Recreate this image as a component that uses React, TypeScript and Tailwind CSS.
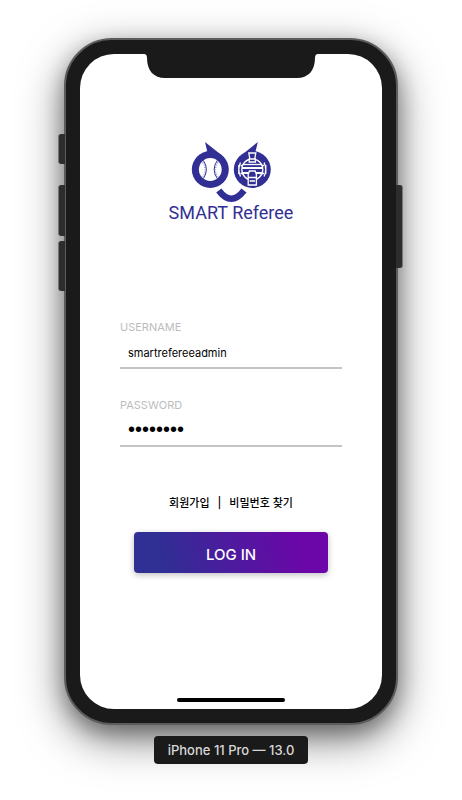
import { useState } from "react";

function Logo() {
  return (
    <svg viewBox="-1 0 84 62" className="h-[62px] w-[84px]" aria-hidden="true">
      <g fill="#312f94">
        <path d="M15 1 L17.5 11.5 L32 14.5 Z" />
        <circle cx="20.3" cy="28.5" r="18.5" />
        <path d="M67.8 1 L65.3 11.5 L51 14.5 Z" />
        <circle cx="62.3" cy="28.5" r="18.5" />
      </g>
      <circle cx="20.3" cy="28.5" r="11.4" fill="#fff" />
      <g fill="none" stroke="#312f94">
        <path d="M13.4 19.5 Q19.4 28.5 13.4 37.5 M27.2 19.5 Q21.2 28.5 27.2 37.5" strokeWidth="1" />
        <path d="M12.6 21.5 Q17.6 28.5 12.6 35.5 M28 21.5 Q23 28.5 28 35.5" strokeWidth="1.4" strokeDasharray="1 1.4" opacity=".5" />
        <path d="M28.8 49.5 Q41.2 66 54 49.5" strokeWidth="6.5" />
      </g>
      <g fill="none" stroke="#fff" strokeWidth="1.3">
        <circle cx="62.3" cy="28.5" r="10.5" />
        <path d="M53 23.5 H71.6" />
        <path d="M52 27 H72.6 M52.4 32 H72.2" strokeWidth="1.8" />
        <path d="M58.8 12 H65.8 L64.7 18 H59.9 Z M59.2 18 H65.4 V21 H59.2 Z" fill="#312f94" />
        <path d="M59.4 30 H65.2 L66.4 33.5 V44 H58.2 V33.5 Z M58.2 36.5 H66.4 M59.6 40 H65" fill="#312f94" />
        <path d="M50.5 21.5 Q47.2 28.5 50.5 35.5 M48.8 24 V33 M74.1 21.5 Q77.4 28.5 74.1 35.5 M75.8 24 V33 M50.5 24.5 H53 M71.5 24.5 H74 M50.5 32.5 H53 M71.5 32.5 H74" />
      </g>
    </svg>
  );
}

function Notch() {
  return (
    <svg viewBox="0 0 174 24" className="mx-auto block h-6 w-[174px]" aria-hidden="true">
      <path d="M0 0 Q3 0 3 4 C3 17 10 24 21 24 H153 C164 24 171 17 171 4 Q171 0 174 0 Z" fill="#1a1a1a" />
    </svg>
  );
}

type FieldProps = {
  id: string;
  label: string;
  type: string;
  value: string;
  onChange: (value: string) => void;
  inputClass: string;
};

function Field({ id, label, type, value, onChange, inputClass }: FieldProps) {
  return (
    <div className="flex flex-col border-b-2 border-[#c4c4c4]">
      <label htmlFor={id} className="text-[11px] leading-4 text-[#bcbcbc]">
        {label}
      </label>
      <input
        id={id}
        type={type}
        value={value}
        onChange={(e) => onChange(e.target.value)}
        className={`h-8 w-full bg-transparent px-2 text-black outline-none ${inputClass}`}
      />
    </div>
  );
}

function SideButton({ className }: { className: string }) {
  return <div className={`absolute w-[7px] border-[#777] bg-[#2d2d2d] ${className}`} />;
}

export default function App() {
  const [username, setUsername] = useState("smartrefereeadmin");
  const [password, setPassword] = useState("referee1");

  return (
    <main className="flex min-h-screen flex-col items-center bg-white px-16 pt-[38px] pb-9 font-['Inter','Noto_Sans_CJK_KR',sans-serif]">
      <div className="relative w-full max-w-[334px]">
        <div className="relative rounded-[48px] border-2 border-[#5c5c5c] bg-[#1a1a1a] p-[14px] shadow-[0_14px_44px_rgba(0,0,0,0.5),0_8px_20px_rgba(0,0,0,0.3)]">
          <div className="flex flex-col rounded-[34px] bg-white pb-[7px]">
            <Notch />
            <div className="mt-[63px] flex flex-col items-center">
              <Logo />
              <h1 className="font-['Roboto',sans-serif] text-[18px] leading-5 text-[#312f94]">SMART Referee</h1>
            </div>
            <form className="mt-[96px] flex flex-col px-10" onSubmit={(e) => e.preventDefault()}>
              <div className="flex flex-col gap-7">
                <Field
                  id="username"
                  label="USERNAME"
                  type="text"
                  value={username}
                  onChange={setUsername}
                  inputClass="pt-1 text-[11px]"
                />
                <Field
                  id="password"
                  label="PASSWORD"
                  type="password"
                  value={password}
                  onChange={setPassword}
                  inputClass="font-['Liberation_Sans',sans-serif] text-[20px]"
                />
              </div>
              <nav className="mt-12 flex items-center justify-center gap-2 text-[11px] leading-4 font-medium text-black">
                <a href="#signup">회원가입</a>
                <span>|</span>
                <a href="#find-password">비밀번호 찾기</a>
              </nav>
              <button
                type="submit"
                className="mx-[14px] mt-[21px] h-[41px] rounded bg-linear-[75deg,#2f2f94_15%,#6b06a8_85%] pt-[6px] text-[15px] font-medium text-white shadow-[0_2px_6px_rgba(0,0,0,0.25)]"
              >
                LOG IN
              </button>
            </form>
            <div className="mx-auto mt-[125px] h-1 w-[108px] rounded-full bg-black" />
          </div>
        </div>
        <SideButton className="top-24 -left-[6px] h-[30px] rounded-l-[3px] border-l" />
        <SideButton className="top-[147px] -left-[6px] h-[51px] rounded-l-[3px] border-l" />
        <SideButton className="top-[203px] -left-[6px] h-[50px] rounded-l-[3px] border-l" />
        <SideButton className="top-[147px] -right-[5px] h-[83px] rounded-r-[3px] border-r" />
      </div>
      <p className="relative mt-[11px] rounded bg-[#1a1a1a] px-[14px] py-1 text-[13px] leading-5 font-medium text-[#d8d8d8]">
        iPhone 11 Pro — 13.0
      </p>
    </main>
  );
}
